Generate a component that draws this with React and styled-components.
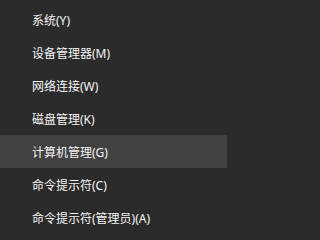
import React from 'react';
import styled, { createGlobalStyle } from 'styled-components';

const GlobalStyle = createGlobalStyle`
  html, body {
    margin: 0;
    padding: 0;
    background: #2b2b2b;
  }
`;

const Menu = styled.ul`
  list-style: none;
  margin: 0;
  padding: 3px 0 0 0;
  width: 228px;
  height: 237px;
  box-sizing: border-box;
  background: #2b2b2b;
  font-family: "Noto Sans", "Noto Sans CJK SC", sans-serif;
  font-size: 12px;
  color: #f5f5f5;
  overflow: hidden;
`;

const Item = styled.li`
  display: flex;
  align-items: center;
  height: 33px;
  width: 227px;
  padding-left: 32px;
  box-sizing: border-box;
  background: ${(p) => (p.$active ? '#414141' : 'transparent')};
  cursor: default;
  white-space: nowrap;
`;

const items = [
  '系统(Y)',
  '设备管理器(M)',
  '网络连接(W)',
  '磁盘管理(K)',
  '计算机管理(G)',
  '命令提示符(C)',
  '命令提示符(管理员)(A)',
];

const App = () => {
  return (
    <>
      <GlobalStyle />
      <Menu>
        {items.map((label, i) => (
          <Item key={label} $active={i === 4}>
            {label}
          </Item>
        ))}
      </Menu>
    </>
  );
};

export default App;
